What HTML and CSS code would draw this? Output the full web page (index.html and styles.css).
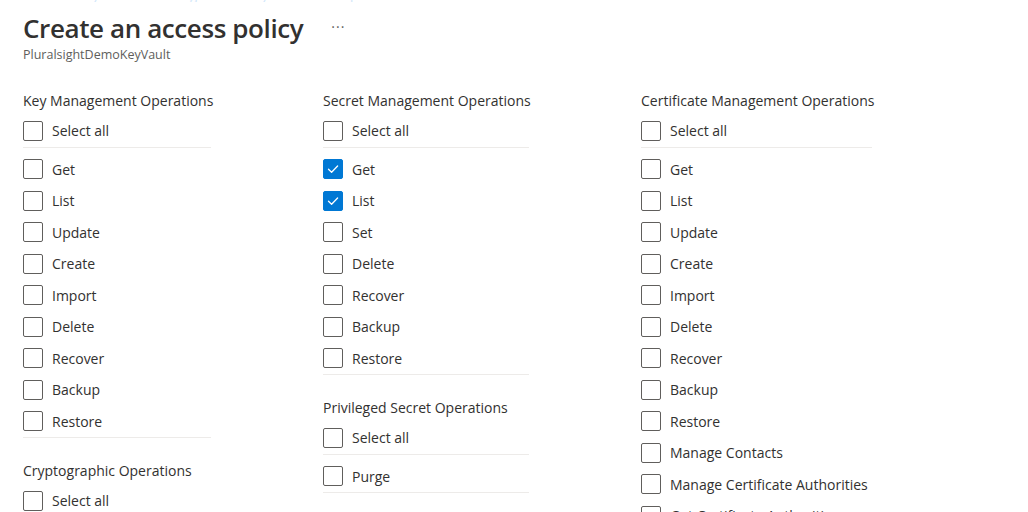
FILE: index.html
```html
<!DOCTYPE html>
<html lang="en">
<head>
<meta charset="utf-8">
<title>Create an access policy</title>
<link rel="stylesheet" href="styles.css">
</head>
<body>
<div class="crumbs"><span>Home</span> &gt; <span>Key vaults</span> &gt; <span>PluralsightDemoKeyVault</span> &gt; <span>Access policies</span></div>
<header class="title-bar">
  <h1 class="title">Create an access policy</h1>
  <span class="more">&middot;&middot;&middot;</span>
</header>
<div class="subtitle">PluralsightDemoKeyVault</div>

<main class="columns">
  <section class="col col-1">
    <div class="group">
      <h2 class="group-title">Key Management Operations</h2>
      <label class="row select-all"><span class="box"></span><span class="lbl">Select all</span></label>
      <div class="items">
        <label class="row"><span class="box"></span><span class="lbl">Get</span></label>
        <label class="row"><span class="box"></span><span class="lbl">List</span></label>
        <label class="row"><span class="box"></span><span class="lbl">Update</span></label>
        <label class="row"><span class="box"></span><span class="lbl">Create</span></label>
        <label class="row"><span class="box"></span><span class="lbl">Import</span></label>
        <label class="row"><span class="box"></span><span class="lbl">Delete</span></label>
        <label class="row"><span class="box"></span><span class="lbl">Recover</span></label>
        <label class="row"><span class="box"></span><span class="lbl">Backup</span></label>
        <label class="row"><span class="box"></span><span class="lbl">Restore</span></label>
      </div>
    </div>
    <div class="group">
      <h2 class="group-title">Cryptographic Operations</h2>
      <label class="row select-all"><span class="box"></span><span class="lbl">Select all</span></label>
      <div class="items">
        <label class="row"><span class="box"></span><span class="lbl">Decrypt</span></label>
      </div>
    </div>
  </section>

  <section class="col col-2">
    <div class="group">
      <h2 class="group-title">Secret Management Operations</h2>
      <label class="row select-all"><span class="box"></span><span class="lbl">Select all</span></label>
      <div class="items">
        <label class="row"><span class="box checked"><svg viewBox="0 0 20 20" width="20" height="20"><path d="M5.5 10.3 L8.6 13.3 L14.6 7" fill="none" stroke="#fff" stroke-width="1.3" stroke-linecap="round" stroke-linejoin="round"/></svg></span><span class="lbl">Get</span></label>
        <label class="row"><span class="box checked"><svg viewBox="0 0 20 20" width="20" height="20"><path d="M5.5 10.3 L8.6 13.3 L14.6 7" fill="none" stroke="#fff" stroke-width="1.3" stroke-linecap="round" stroke-linejoin="round"/></svg></span><span class="lbl">List</span></label>
        <label class="row"><span class="box"></span><span class="lbl">Set</span></label>
        <label class="row"><span class="box"></span><span class="lbl">Delete</span></label>
        <label class="row"><span class="box"></span><span class="lbl">Recover</span></label>
        <label class="row"><span class="box"></span><span class="lbl">Backup</span></label>
        <label class="row"><span class="box"></span><span class="lbl">Restore</span></label>
      </div>
    </div>
    <div class="group">
      <h2 class="group-title">Privileged Secret Operations</h2>
      <label class="row select-all"><span class="box"></span><span class="lbl">Select all</span></label>
      <div class="items">
        <label class="row"><span class="box"></span><span class="lbl">Purge</span></label>
      </div>
    </div>
  </section>

  <section class="col col-3">
    <div class="group">
      <h2 class="group-title">Certificate Management Operations</h2>
      <label class="row select-all"><span class="box"></span><span class="lbl">Select all</span></label>
      <div class="items">
        <label class="row"><span class="box"></span><span class="lbl">Get</span></label>
        <label class="row"><span class="box"></span><span class="lbl">List</span></label>
        <label class="row"><span class="box"></span><span class="lbl">Update</span></label>
        <label class="row"><span class="box"></span><span class="lbl">Create</span></label>
        <label class="row"><span class="box"></span><span class="lbl">Import</span></label>
        <label class="row"><span class="box"></span><span class="lbl">Delete</span></label>
        <label class="row"><span class="box"></span><span class="lbl">Recover</span></label>
        <label class="row"><span class="box"></span><span class="lbl">Backup</span></label>
        <label class="row"><span class="box"></span><span class="lbl">Restore</span></label>
        <label class="row"><span class="box"></span><span class="lbl">Manage Contacts</span></label>
        <label class="row"><span class="box"></span><span class="lbl">Manage Certificate Authorities</span></label>
        <label class="row"><span class="box"></span><span class="lbl">Get Certificate Authorities</span></label>
      </div>
    </div>
  </section>
</main>
</body>
</html>
```

FILE: styles.css
```css
html, body {
  margin: 0;
  padding: 0;
  background: #ffffff;
  overflow: hidden;
  height: 512px;
}

body {
  font-family: "Open Sans", "Noto Sans", "Liberation Sans", sans-serif;
  color: #323130;
  padding: 0 0 0 23px;
}

.crumbs {
  height: 2px;
  overflow: hidden;
  font-size: 13px;
  line-height: 13px;
  color: #cfe6f9;
  margin-left: 10px;
  display: flex;
  align-items: flex-end;
}

.title-bar {
  display: flex;
  align-items: center;
  height: 38px;
  margin-top: 7px;
}

.title {
  margin: 0;
  font-size: 26px;
  font-weight: 600;
  line-height: 36px;
  color: #323130;
  letter-spacing: -0.4px;
}

.more {
  margin-left: 28px;
  font-size: 14px;
  color: #605e5c;
  letter-spacing: 1px;
  position: relative;
  top: -2px;
}

.subtitle {
  font-size: 12.5px;
  line-height: 16px;
  color: #605e5c;
  margin-top: 0;
}

.columns {
  display: flex;
  align-items: flex-start;
  gap: 112px;
  margin-top: 28px;
}

.col-1 { width: 188px; }
.col-2 { width: 206px; }
.col-3 { width: 231px; }

.group + .group {
  margin-top: 23px;
}

.group-title {
  margin: 0 0 4px 0;
  font-size: 14px;
  font-weight: 400;
  line-height: 20px;
  color: #323130;
  white-space: nowrap;
}

.row {
  display: flex;
  align-items: center;
  height: 31.5px;
  font-size: 14px;
  color: #323130;
  white-space: nowrap;
}

.select-all {
  border-bottom: 1px solid #edebe9;
  margin-bottom: 6px;
}

.items {
  border-bottom: 1px solid #edebe9;
}

.box {
  box-sizing: border-box;
  width: 20px;
  height: 20px;
  flex: none;
  border: 1px solid #605e5c;
  border-radius: 2px;
  margin-right: 9px;
  display: flex;
}

.box.checked {
  background: #0078d4;
  border-color: #0078d4;
}

.box svg {
  margin: -1px;
}
```
